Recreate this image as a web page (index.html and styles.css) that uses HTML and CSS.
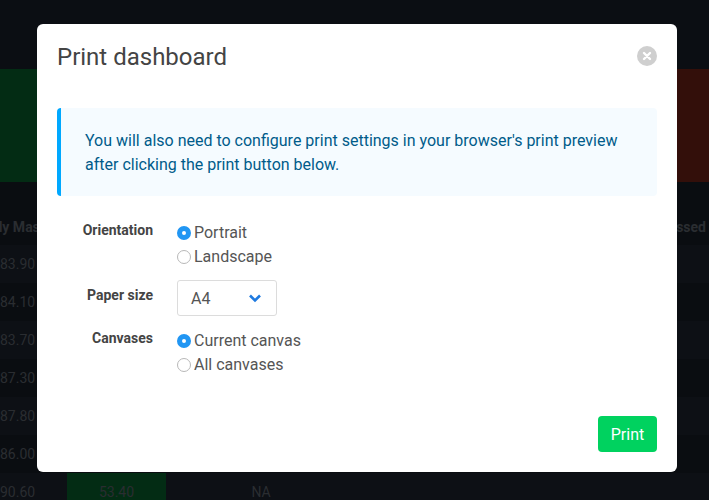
FILE: index.html
```html
<!DOCTYPE html>
<html lang="en">
<head>
<meta charset="utf-8">
<title>Print dashboard</title>
<link rel="stylesheet" href="styles.css">
</head>
<body>
<div class="dash">
  <div class="dash-top"></div>
  <div class="dash-band">
    <div class="band-green"></div>
    <div class="band-red"></div>
  </div>
  <div class="dash-head">
    <span class="head-left">Weekly Mass</span>
    <span class="head-right">Processed</span>
  </div>
  <div class="row"><span class="cell-num">83.90</span></div>
  <div class="row alt"><span class="cell-num">84.10</span></div>
  <div class="row"><span class="cell-num">83.70</span></div>
  <div class="row alt"><span class="cell-num">87.30</span></div>
  <div class="row"><span class="cell-num">87.80</span></div>
  <div class="row alt"><span class="cell-num">86.00</span></div>
  <div class="row"><span class="cell-num">90.60</span><span class="cell-good">53.40</span><span class="cell-na">NA</span></div>
</div>

<div class="modal">
  <div class="modal-head">
    <h1 class="modal-title">Print dashboard</h1>
    <button class="close" aria-label="Close">
      <svg width="20" height="20" viewBox="0 0 20 20"><circle cx="10" cy="10" r="10" fill="#cfcfcf"/><path d="M7 7l6 6M13 7l-6 6" stroke="#fff" stroke-width="2.4" stroke-linecap="round"/></svg>
    </button>
  </div>
  <div class="notice">You will also need to configure print settings in your browser's print preview after clicking the print button below.</div>
  <div class="form">
    <div class="label">Orientation</div>
    <div class="options">
      <div class="option"><span class="radio on"></span>Portrait</div>
      <div class="option"><span class="radio"></span>Landscape</div>
    </div>
    <div class="label label-select">Paper size</div>
    <div class="select">
      <span>A4</span>
      <svg width="14" height="10" viewBox="0 0 14 10"><path d="M2 2.5l5 5 5-5" fill="none" stroke="#1f7ae0" stroke-width="2.6"/></svg>
    </div>
    <div class="label">Canvases</div>
    <div class="options">
      <div class="option"><span class="radio on"></span>Current canvas</div>
      <div class="option"><span class="radio"></span>All canvases</div>
    </div>
  </div>
  <div class="modal-foot"><button class="print">Print</button></div>
</div>
</body>
</html>
```

FILE: styles.css
```css
html, body {
  margin: 0;
  height: 100%;
  overflow: hidden;
  background: #0c0f14;
  font-family: Roboto, "Liberation Sans", sans-serif;
}

.dash {
  height: 500px;
  display: flex;
  flex-direction: column;
  color: #2a2d31;
  overflow: hidden;
}
.dash-top {
  height: 69px;
  flex: none;
  background: #0b0e13;
}
.dash-band {
  height: 113px;
  flex: none;
  display: flex;
  justify-content: space-between;
}
.band-green { width: 340px; background: #032c14; }
.band-red { width: 340px; background: #330f0a; }
.dash-head {
  height: 63px;
  flex: none;
  display: flex;
  justify-content: space-between;
  align-items: flex-end;
  padding-bottom: 10px;
  box-sizing: border-box;
  font-size: 14px;
  font-weight: 700;
  background: #0a0d11;
}
.head-left { margin-left: -36px; }
.head-right { margin-right: 3px; }
.row {
  height: 38px;
  flex: none;
  display: flex;
  align-items: center;
  font-size: 14px;
  background: #0d1015;
}
.row.alt { background: #0a0d11; }
.cell-num {
  width: 67px;
  box-sizing: border-box;
  padding-right: 33px;
  text-align: right;
  white-space: nowrap;
}
.cell-good {
  width: 99px;
  height: 100%;
  background: #032c14;
  display: flex;
  align-items: center;
  justify-content: center;
}
.cell-na {
  width: 190px;
  text-align: center;
}

.modal {
  position: absolute;
  left: 37px;
  top: 24px;
  width: 640px;
  height: 448px;
  box-sizing: border-box;
  padding: 0 20px;
  background: #fff;
  border-radius: 6px;
  display: flex;
  flex-direction: column;
}
.modal-head {
  height: 84px;
  flex: none;
  display: flex;
  justify-content: space-between;
  align-items: flex-start;
}
.modal-title {
  margin: 17px 0 0;
  font-size: 24px;
  line-height: 32px;
  font-weight: 400;
  color: #444;
}
.close {
  margin: 22px 0 0;
  padding: 0;
  border: 0;
  background: none;
  width: 20px;
  height: 20px;
  display: block;
}
.close svg { display: block; }
.notice {
  height: 88px;
  box-sizing: border-box;
  padding: 21px 24px;
  border-left: 4px solid #00a8ff;
  border-radius: 4px;
  background: #f5fbff;
  color: #005b8a;
  font-size: 16px;
  line-height: 24px;
}
.form {
  margin-top: 24px;
  display: grid;
  grid-template-columns: 96px 1fr;
  column-gap: 24px;
  row-gap: 12px;
  align-items: start;
  color: #555;
  font-size: 16px;
}
.label {
  text-align: right;
  font-size: 14px;
  font-weight: 700;
  color: #444;
  line-height: 24px;
  margin-top: -2px;
}
.label-select { margin-top: 3px; }
.options { display: flex; flex-direction: column; }
.option {
  height: 24px;
  display: flex;
  align-items: center;
  gap: 3px;
}
.radio {
  width: 14px;
  height: 14px;
  margin-top: 2px;
  box-sizing: border-box;
  border: 1px solid #b8b8b8;
  border-radius: 50%;
  background: #fff;
}
.radio.on {
  border: 5px solid #2196f3;
}
.select {
  width: 100px;
  height: 36px;
  box-sizing: border-box;
  padding: 0 14px 0 13px;
  border: 1px solid #dcdcdc;
  border-radius: 3px;
  display: flex;
  align-items: center;
  justify-content: space-between;
}
.modal-foot {
  margin-top: auto;
  padding-bottom: 20px;
  display: flex;
  justify-content: flex-end;
}
.print {
  width: 59px;
  height: 36px;
  padding: 0;
  border: 0;
  border-radius: 4px;
  background: #00d25f;
  color: #fff;
  font-family: inherit;
  font-size: 16px;
}
```
